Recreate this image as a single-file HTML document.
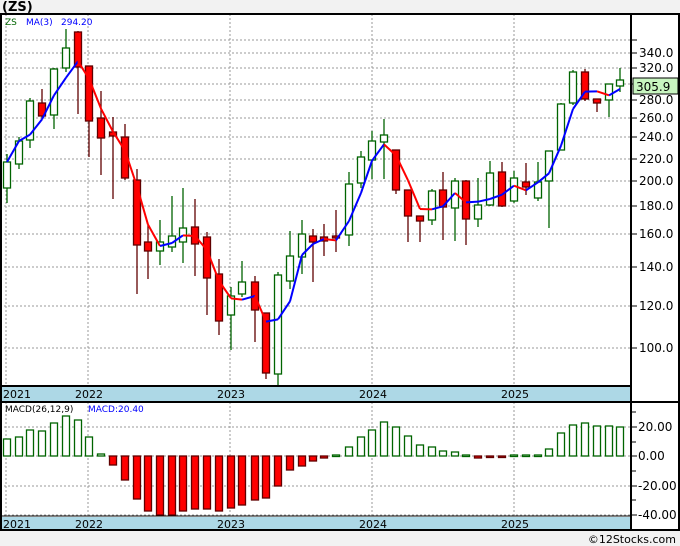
<!DOCTYPE html>
<html><head><meta charset="utf-8"><style>
html,body{margin:0;padding:0;background:#f2f2f2;}
svg{display:block;font-family:"DejaVu Sans","Liberation Sans",sans-serif;}
</style></head><body>
<svg id="s" width="680" height="546" xmlns="http://www.w3.org/2000/svg">
<rect x="0" y="0" width="680" height="546" fill="#f2f2f2"/>
<rect x="0" y="14" width="680" height="516" fill="#fff"/>
<text x="2" y="11" font-size="13" font-weight="bold" fill="#000">(ZS)</text>
<g id="grid"></g>
<rect x="0" y="387" width="631" height="14" fill="#add8e6"/>
<rect x="0" y="517" width="631" height="13" fill="#add8e6"/>
<g font-size="11" fill="#000">
<text x="3" y="398">2021</text><text x="75" y="398">2022</text><text x="217" y="398">2023</text><text x="359" y="398">2024</text><text x="501" y="398">2025</text>
<text x="3" y="528">2021</text><text x="75" y="528">2022</text><text x="217" y="528">2023</text><text x="359" y="528">2024</text><text x="501" y="528">2025</text>
</g>
<g id="c"></g>
<text x="5" y="25" font-size="9" fill="#006400">ZS</text>
<text x="26" y="25" font-size="9" fill="#0000ff">MA(3)</text>
<text x="61" y="25" font-size="9" fill="#0000ff">294.20</text>
<text x="5" y="412" font-size="9" fill="#000">MACD(26,12,9)</text>
<text x="88" y="412" font-size="9" fill="#0000ff">MACD:20.40</text>
<g stroke="#000" stroke-width="2" fill="none">
<line x1="0" y1="14" x2="680" y2="14"/>
<line x1="0" y1="386" x2="631" y2="386"/>
<line x1="0" y1="402" x2="680" y2="402"/>
<line x1="0" y1="530" x2="680" y2="530"/>
<line x1="631" y1="14" x2="631" y2="530"/>
<line x1="679" y1="14" x2="679" y2="530"/>
<line x1="1" y1="14" x2="1" y2="530"/>
</g>
<line x1="0" y1="516" x2="631" y2="516" stroke="#000" stroke-width="1"/>
<rect x="633" y="78" width="45" height="16" fill="#c8f5c0" stroke="#000"/>
<text x="636" y="91" font-size="12" fill="#000">305.9</text>
<text x="676" y="543" font-size="11" fill="#000" text-anchor="end">©12Stocks.com</text>
</svg>
<script>
var NS="http://www.w3.org/2000/svg";
function el(p,t,a){var e=document.createElementNS(NS,t);for(var k in a)e.setAttribute(k,a[k]);p.appendChild(e);return e;}
var g=document.getElementById('grid'),c=document.getElementById('c');
var labels=[[340,53],[320,68],[280,100],[260,118],[240,137],[220,159],[200,181],[180,206],[160,234],[140,267],[120,306],[100,348]];
[40,84].forEach(function(y){el(g,'line',{x1:0,x2:631,y1:y,y2:y,stroke:'#999','stroke-dasharray':'2,2'});el(g,'line',{x1:631,x2:637,y1:y,y2:y,stroke:'#000'});});
labels.forEach(function(l){el(g,'line',{x1:0,x2:631,y1:l[1],y2:l[1],stroke:'#999','stroke-dasharray':'2,2'});el(g,'line',{x1:631,x2:637,y1:l[1],y2:l[1],stroke:'#000'});var t=el(g,'text',{x:639,y:l[1]+4,'font-size':12,fill:'#000'});t.textContent=l[0]+'.0';});
[[427,'20.00'],[456,'0.00'],[486,'-20.00'],[515,'-40.00']].forEach(function(l){el(g,'line',{x1:0,x2:631,y1:l[0],y2:l[0],stroke:'#999','stroke-dasharray':'2,2'});el(g,'line',{x1:631,x2:637,y1:l[0],y2:l[0],stroke:'#000'});var t=el(g,'text',{x:638,y:l[0]+4,'font-size':12,fill:'#000'});t.textContent=l[1];});
[412,442,471,500].forEach(function(y){el(g,'line',{x1:631,x2:636,y1:y,y2:y,stroke:'#000'});});
[6,88,230,372,514].forEach(function(x){el(g,'line',{x1:x,x2:x,y1:14,y2:530,stroke:'#999','stroke-dasharray':'2,2'});});
var C=[[7,162,188,154,203,1],[19,141,164,137,169,1],[30,101,140,98,148,1],[42,103,116,89,118,0],[54,69,115,68,129,1],[66,48,68,29,72,1],[78,32,67,31,114,0],[89,66,121,66,157,0],[101,118,138,91,175,0],[113,132,136,117,199,0],[125,137,178,124,180,0],[137,180,245,169,294,0],[148,242,251,225,279,0],[160,242,251,220,265,1],[172,236,247,196,252,1],[183,228,242,188,263,1],[195,227,244,199,276,0],[207,237,278,232,315,0],[219,274,321,259,335,0],[231,296,315,287,350,1],[242,282,294,261,297,1],[255,282,310,276,342,0],[266,313,373,313,379,0],[278,275,374,272,387,1],[290,256,281,231,289,1],[302,234,257,220,274,1],[313,236,242,229,282,0],[324,237,241,224,256,0],[336,236,238,210,252,0],[349,184,235,172,246,1],[361,157,183,151,188,1],[372,141,160,131,179,1],[384,135,142,119,179,1],[396,150,190,150,194,0],[408,190,216,190,242,0],[420,216,221,216,242,0],[432,191,220,189,225,1],[443,190,207,172,240,0],[455,181,208,178,241,1],[466,181,219,180,245,0],[478,205,219,178,227,1],[490,173,205,161,206,1],[502,172,206,162,207,0],[514,178,201,171,203,1],[526,182,187,163,195,0],[538,182,198,162,201,1],[549,151,181,151,228,1],[561,104,150,103,150,1],[573,72,103,70,105,1],[585,72,99,69,101,0],[597,99,103,99,112,0],[609,84,100,84,117,1],[620,80,86,68,92,1]];
var closes=C.map(function(d){return d[5]?d[1]:d[2];});
C.forEach(function(d){var col=d[5]?'#006400':'#600000';el(c,'line',{x1:d[0],x2:d[0],y1:d[3],y2:d[4],stroke:col,'stroke-width':1.3});
el(c,'rect',{x:d[0]-3.5,y:d[1],width:7,height:Math.max(d[2]-d[1],2),fill:d[5]?'#fff':'#ff0000',stroke:d[5]?'#006400':'#600000','stroke-width':1.3});});
var ma=[];for(var i=0;i<C.length;i++){var a=i<2?closes[i]:(closes[i]+closes[i-1]+closes[i-2])/3;ma.push(a);}
for(var i=1;i<C.length;i++){el(c,'line',{x1:C[i-1][0],y1:ma[i-1],x2:C[i][0],y2:ma[i],stroke:ma[i]<=ma[i-1]?'#0000ff':'#ff0000','stroke-width':2});}
var M=[439,437,430,431,423,416,420,437,454,465,480,499,511,515,515,511,509,509,511,508,505,500,498,486,470,466,461,458,455,447,437,430,422,427,436,445,447,451,452,455,458,457,457,455,455,455,449,433,425,423,426,426,427];
M.forEach(function(v,i){var x=C[i][0];var pos=v<=456;var y=Math.min(v,456),h=Math.max(Math.abs(456-v),1.5);
el(c,'rect',{x:x-3.5,y:y,width:7,height:h,fill:pos?'#fff':'#ff0000',stroke:pos?'#006400':'#600000','stroke-width':1.3});});
</script>
</body></html>
